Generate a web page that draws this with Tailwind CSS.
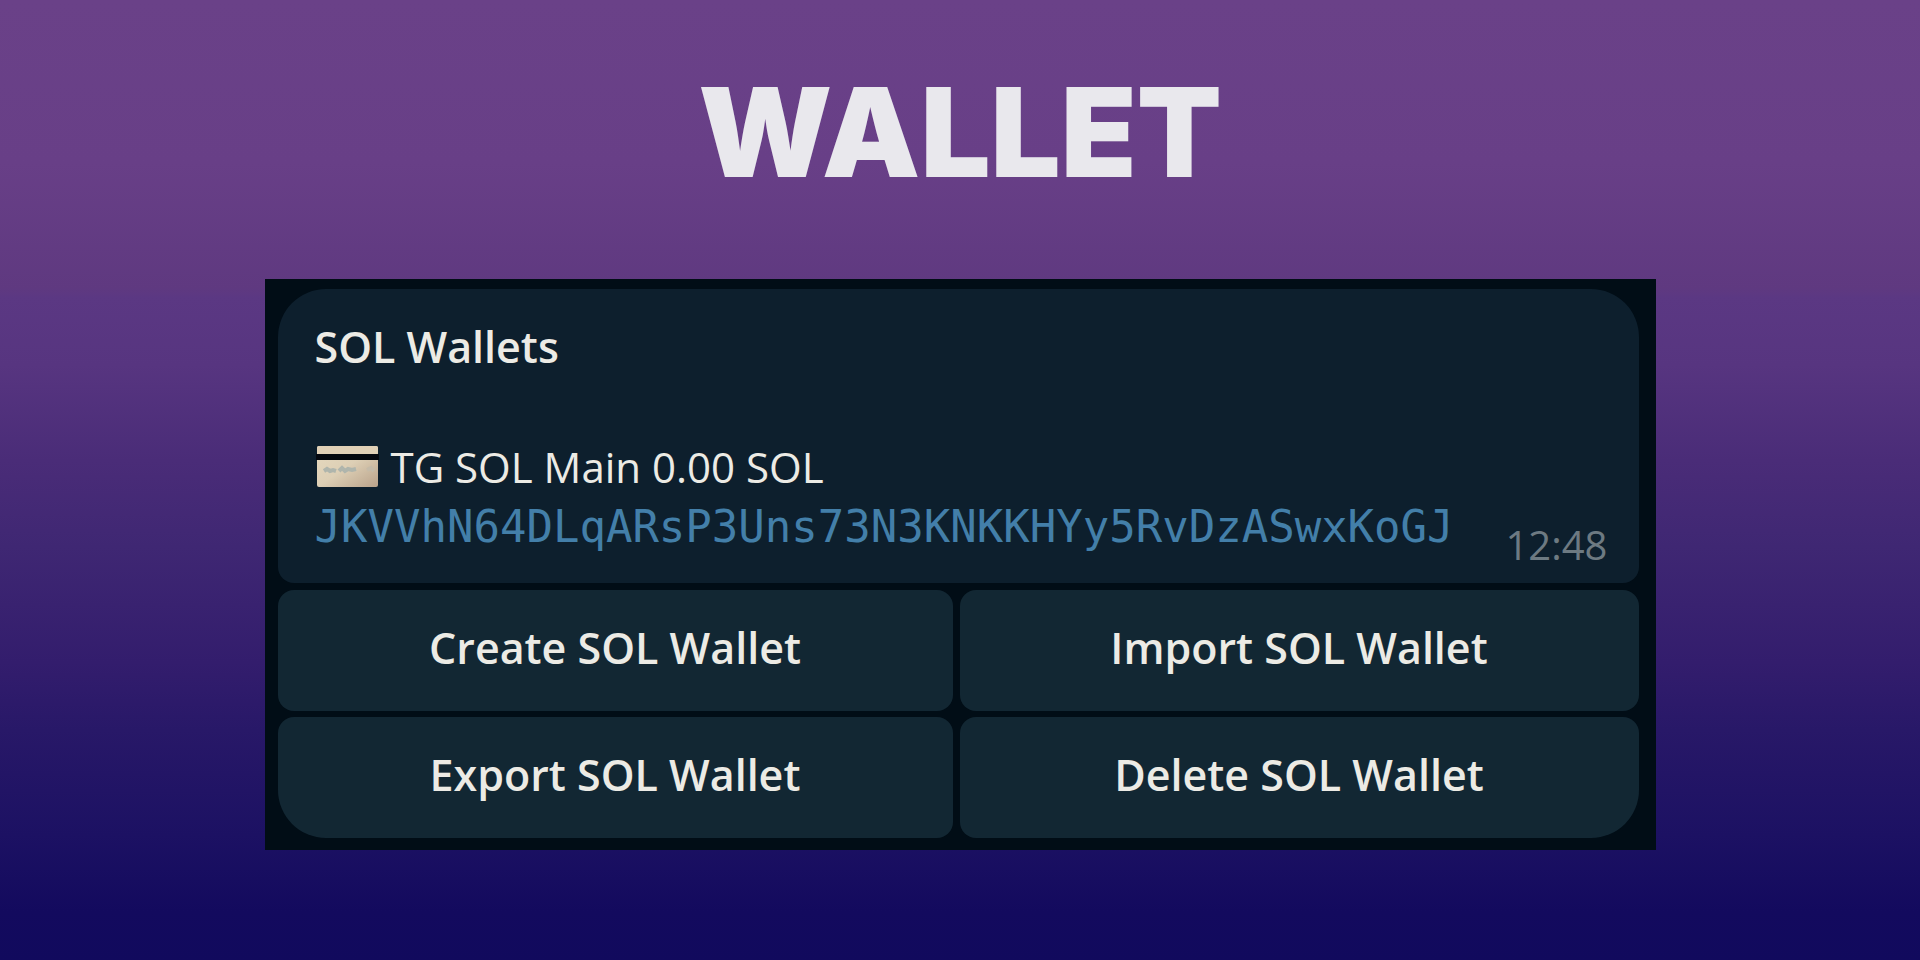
<!DOCTYPE html>
<html lang="en">
<head>
    <meta charset="UTF-8">
    <meta name="viewport" content="width=device-width, initial-scale=1.0">
    <title>Wallet</title>
    <script src="https://cdn.jsdelivr.net/npm/@tailwindcss/browser@4"></script>
</head>
<body class="min-h-screen pt-18 pb-10 font-['Open_Sans',sans-serif] text-[#ecebe5] bg-[linear-gradient(to_bottom,#6a4188_0%,#683f87_17%,#5f3980_30%,#5b3883_31%,#573580_38%,#4a2c78_48%,#3f2773_57%,#331d6d_69%,#281868_76%,#1c1163_87%,#130a5e_95%,#110a5d_100%)]">
    <h1 class="mb-[87px] text-center font-['Inter',sans-serif] text-[124px] leading-[120px] font-black text-[#e9e8ed]">WALLET</h1>

    <main class="mx-auto w-full max-w-[1391px] bg-[#010d16] pt-[10px] pr-[17px] pb-3 pl-[13px]">
        <!-- Message -->
        <section class="mb-[7px] flex flex-wrap items-end justify-between rounded-t-[48px] rounded-b-2xl bg-[#0d1f2d] pt-7 pr-[31px] pb-2 pl-[37px]">
            <div class="pb-[18px] text-[42px] leading-[60px]">
                <h2 class="mb-[60px] text-[43px] font-semibold">SOL Wallets</h2>
                <p class="flex items-center gap-3">
                    <svg class="h-[42px] w-16" viewBox="0 0 64 42" aria-hidden="true">
                        <defs>
                            <linearGradient id="card" x1="0" y1="0" x2="1" y2="1">
                                <stop offset="0" stop-color="#e6dac0"/>
                                <stop offset="0.5" stop-color="#ddcfb5"/>
                                <stop offset="1" stop-color="#b9a28a"/>
                            </linearGradient>
                        </defs>
                        <rect x="2" y="0" width="61" height="41" rx="2" fill="url(#card)"/>
                        <rect x="2" y="0" width="61" height="8" rx="2" fill="#e0d0b6"/>
                        <rect x="1" y="8" width="63" height="6" fill="#04080f"/>
                        <path d="M9 25l3-2 3 2 3-1 3 1M24 25l3-3 3 3 3-2 4 1 4-1" fill="none" stroke="#afb5ac" stroke-width="4"/>
                        <path d="M52 24l4-2 3 3" fill="none" stroke="#c5bba8" stroke-width="4"/>
                    </svg>
                    <span>TG SOL Main 0.00 SOL</span>
                </p>
                <p class="font-['DejaVu_Sans_Mono',monospace] text-[44px] break-all text-[#437fa9]">JKVVhN64DLqARsP3Uns73N3KNKKHYy5RvDzASwxKoGJ</p>
            </div>
            <time class="text-[40px] leading-[60px] text-[#6d7a82]">12:48</time>
        </section>

        <!-- Actions -->
        <div class="grid grid-cols-[675fr_679fr] gap-x-[7px] gap-y-[6px] text-[43px] leading-[60px] font-semibold">
            <button class="rounded-2xl bg-[#122733] pt-7 pb-[33px]">Create SOL Wallet</button>
            <button class="rounded-2xl bg-[#122733] pt-7 pb-[33px]">Import SOL Wallet</button>
            <button class="rounded-2xl rounded-bl-[48px] bg-[#122733] pt-7 pb-[33px]">Export SOL Wallet</button>
            <button class="rounded-2xl rounded-br-[48px] bg-[#122733] pt-7 pb-[33px]">Delete SOL Wallet</button>
        </div>
    </main>
</body>
</html>
